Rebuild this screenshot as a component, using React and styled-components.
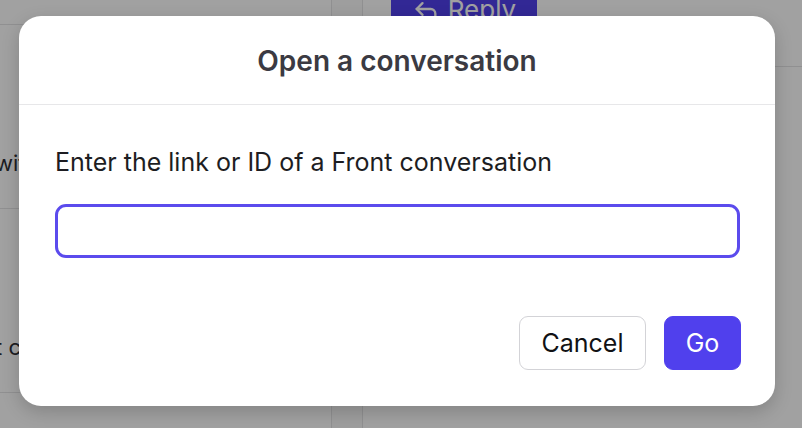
import React from "react";
import styled, { createGlobalStyle } from "styled-components";
import { Reply } from "lucide-react";

const GlobalStyle = createGlobalStyle`
  * { box-sizing: border-box; }
  body {
    margin: 0;
    font-family: Inter, "Noto Sans", sans-serif;
    background: #ffffff;
  }
`;

export default function App() {
  return (
    <>
      <GlobalStyle />
      <Page>
        <Workspace>
          <ListColumn>
            <ListHead />
            <ListRow>
              <RowText>with</RowText>
            </ListRow>
            <ListRow>
              <RowText>t can</RowText>
            </ListRow>
          </ListColumn>
          <Rail />
          <MainPanel>
            <TopBar>
              <ReplyButton>
                <Reply size={28} strokeWidth={2} />
                Reply
              </ReplyButton>
            </TopBar>
          </MainPanel>
        </Workspace>

        <Overlay>
          <Dialog>
            <DialogHeader>
              <Title>Open a conversation</Title>
            </DialogHeader>
            <DialogBody>
              <Label htmlFor="conversation-link">Enter the link or ID of a Front conversation</Label>
              <LinkInput id="conversation-link" type="text" />
            </DialogBody>
            <DialogFooter>
              <Button>Cancel</Button>
              <Button $primary>Go</Button>
            </DialogFooter>
          </Dialog>
        </Overlay>
      </Page>
    </>
  );
}

const Page = styled.div`
  position: relative;
  width: 802px;
  height: 428px;
  overflow: hidden;
  background: #ffffff;
`;

const Workspace = styled.div`
  display: flex;
  height: 100%;
`;

const ListColumn = styled.div`
  width: 332px;
  flex-shrink: 0;
  border-right: 1px solid #e4e4e6;
  display: flex;
  flex-direction: column;
`;

const ListHead = styled.div`
  height: 25px;
  border-bottom: 1px solid #e4e4e6;
`;

const ListRow = styled.div`
  height: 184px;
  border-bottom: 1px solid #e4e4e6;
  display: flex;
  align-items: flex-end;
  padding-bottom: 32px;
`;

const RowText = styled.span`
  margin-left: -5px;
  font-size: 22px;
  color: #2f2f35;
  white-space: nowrap;
  line-height: 26px;
`;

const Rail = styled.div`
  width: 31px;
  flex-shrink: 0;
  border-right: 1px solid #e4e4e6;
  background: #fafafa;
`;

const MainPanel = styled.div`
  flex: 1;
  display: flex;
  flex-direction: column;
`;

const TopBar = styled.div`
  height: 67px;
  border-bottom: 1px solid #e4e4e6;
  display: flex;
  align-items: flex-start;
  padding-left: 28px;
`;

const ReplyButton = styled.button`
  margin-top: -18px;
  height: 54px;
  width: 146px;
  display: flex;
  align-items: center;
  justify-content: center;
  gap: 8px;
  border: none;
  border-radius: 8px;
  background: #5040ed;
  color: #ffffff;
  font-family: Inter, "Noto Sans", sans-serif;
  font-size: 26px;
`;

const Overlay = styled.div`
  position: absolute;
  inset: 0;
  background: rgba(0, 0, 0, 0.37);
  display: flex;
  align-items: flex-start;
  padding: 16px 0 0 19px;
`;

const Dialog = styled.div`
  width: 756px;
  height: 390px;
  background: #ffffff;
  border-radius: 22px;
  box-shadow: 0 6px 18px rgba(0, 0, 0, 0.18);
  display: flex;
  flex-direction: column;
`;

const DialogHeader = styled.div`
  height: 89px;
  border-bottom: 1px solid #e7e7e9;
  display: flex;
  align-items: center;
  justify-content: center;
`;

const Title = styled.h2`
  margin: 0;
  padding-top: 2px;
  font-size: 28px;
  font-weight: 600;
  color: #3b3a42;
`;

const DialogBody = styled.div`
  display: flex;
  flex-direction: column;
  padding: 42px 35px 0 36px;
`;

const Label = styled.label`
  font-size: 25px;
  line-height: 30px;
  color: #1d1d22;
  margin-bottom: 27px;
`;

const LinkInput = styled.input`
  height: 54px;
  width: 100%;
  border: 3px solid #5b4bed;
  border-radius: 11px;
  outline: none;
  padding: 0 16px;
  font-family: Inter, "Noto Sans", sans-serif;
  font-size: 22px;
`;

const DialogFooter = styled.div`
  margin-top: auto;
  display: flex;
  justify-content: flex-end;
  gap: 18px;
  padding: 0 34px 36px 0;
`;

const Button = styled.button`
  height: 54px;
  padding: 0 20px;
  min-width: ${(p) => (p.$primary ? "77px" : "127px")};
  border-radius: 9px;
  border: 1px solid ${(p) => (p.$primary ? "#5040ed" : "#d3d3d7")};
  background: ${(p) => (p.$primary ? "#5040ed" : "#ffffff")};
  color: ${(p) => (p.$primary ? "#ffffff" : "#111114")};
  font-family: Inter, "Noto Sans", sans-serif;
  font-size: 25px;
  cursor: pointer;
`;
